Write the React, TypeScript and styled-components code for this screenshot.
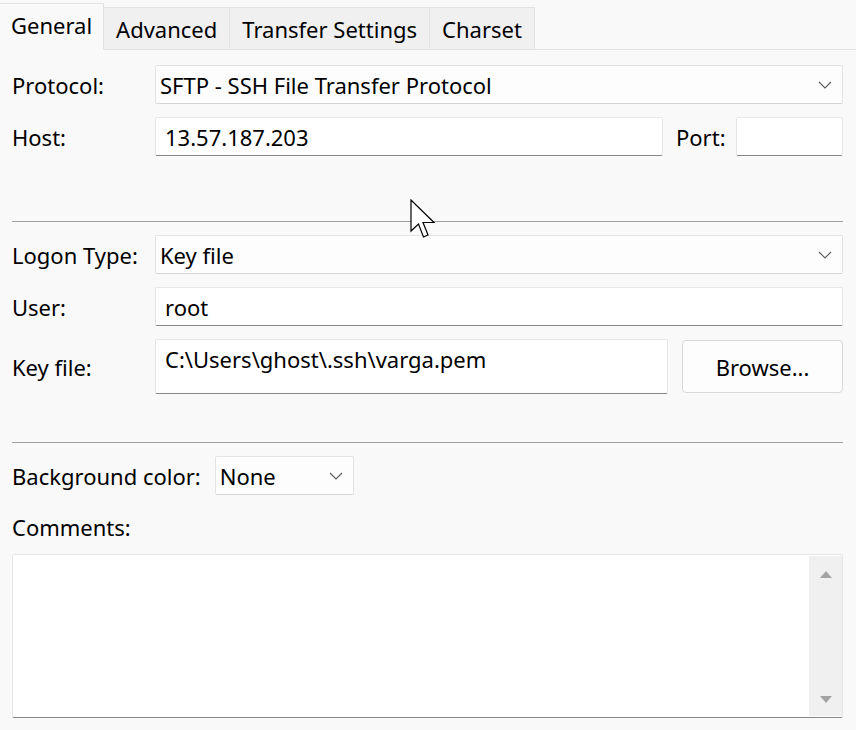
import React from "react";
import styled, { createGlobalStyle } from "styled-components";

const Global = createGlobalStyle`
  html, body { margin: 0; padding: 0; background: #f9f9f9; }
  body { font-family: "Segoe UI", "Noto Sans", "Open Sans", sans-serif; color: #000; }
  * { box-sizing: border-box; }
`;

const Window = styled.div`
  position: relative;
  width: 856px;
  height: 730px;
  overflow: hidden;
  background: #f9f9f9;
  font-size: 22px;
`;

const TabBar = styled.div`
  display: flex;
  align-items: flex-end;
  height: 50px;
  border-bottom: 1px solid #e2e2e2;
  background: #f9f9f9;
`;

const Tab = styled.div<{ $active?: boolean }>`
  display: flex;
  align-items: center;
  justify-content: center;
  height: ${(p) => (p.$active ? "47px" : "42px")};
  padding: 0 ${(p) => (p.$active ? "11px" : "12px")};
  margin-bottom: ${(p) => (p.$active ? "-1px" : "0")};
  background: ${(p) => (p.$active ? "#f9f9f9" : "#f0f0f0")};
  border: 1px solid #e2e2e2;
  border-bottom: ${(p) => (p.$active ? "1px solid #f9f9f9" : "none")};
  border-left: ${(p) => (p.$active ? "none" : "1px solid #e2e2e2")};
  margin-left: ${(p) => (p.$active ? "0" : "-1px")};
  padding-bottom: ${(p) => (p.$active ? "4px" : "0")};
  white-space: nowrap;
  &:first-child { margin-left: 0; }
`;

const Panel = styled.div`
  display: flex;
  flex-direction: column;
  padding: 15px 13px 0 12px;
`;

const Row = styled.div<{ $gap?: number; $h?: number }>`
  display: grid;
  grid-template-columns: 143px 1fr;
  align-items: center;
  height: ${(p) => p.$h ?? 39}px;
  margin-top: ${(p) => p.$gap ?? 0}px;
`;

const Label = styled.div`
  white-space: nowrap;
`;

const InlineRow = styled.div<{ $gap?: number }>`
  display: flex;
  align-items: center;
  gap: 14px;
  height: 39px;
  margin-top: ${(p) => p.$gap ?? 0}px;
`;

const Controls = styled.div`
  display: flex;
  align-items: center;
  height: 100%;
`;

const SelectBox = styled.div<{ $w?: number }>`
  display: flex;
  align-items: center;
  justify-content: space-between;
  height: 39px;
  width: ${(p) => (p.$w ? `${p.$w}px` : "100%")};
  background: #fdfdfd;
  border: 1px solid #e4e4e4;
  border-bottom-color: #d6d6d6;
  border-radius: 2px;
  padding: 0 10px 0 4px;
  white-space: nowrap;
`;

const TextBox = styled.div<{ $w?: number; $h?: number; $top?: boolean }>`
  display: flex;
  align-items: ${(p) => (p.$top ? "flex-start" : "center")};
  height: ${(p) => p.$h ?? 39}px;
  width: ${(p) => (p.$w ? `${p.$w}px` : "auto")};
  flex: ${(p) => (p.$w ? "none" : "1")};
  background: #ffffff;
  border: 1px solid #e6e6e6;
  border-bottom: 1px solid #868686;
  border-radius: 2px;
  padding: ${(p) => (p.$top ? "4px 9px 0" : "0 9px")};
  white-space: nowrap;
`;

const PortLabel = styled.div`
  margin: 0 0 0 13px;
  width: 60px;
`;

const Button = styled.div`
  display: flex;
  align-items: center;
  justify-content: center;
  width: 161px;
  height: 53px;
  margin-left: 14px;
  background: #fdfdfd;
  border: 1px solid #d9d9d9;
  border-radius: 4px;
`;

const Separator = styled.div<{ $top: number }>`
  height: 1px;
  background: #a0a0a0;
  margin-top: ${(p) => p.$top}px;
`;

const CommentsLabel = styled.div`
  margin-top: 14px;
  height: 36px;
  display: flex;
  align-items: center;
`;

const TextArea = styled.div`
  display: flex;
  justify-content: flex-end;
  height: 164px;
  margin-top: 9px;
  background: #ffffff;
  border: 1px solid #e6e6e6;
  border-bottom: 1px solid #868686;
  border-radius: 2px;
`;

const ScrollBar = styled.div`
  display: flex;
  flex-direction: column;
  justify-content: space-between;
  align-items: center;
  width: 33px;
  background: #f0f0f0;
  padding: 14px 0 12px;
  margin: 1px 0 1px 0;
`;

const Chevron = () => (
  <svg width="14" height="8" viewBox="0 0 14 8">
    <path d="M1 1 L7 7 L13 1" fill="none" stroke="#5a5a5a" strokeWidth="1.1" />
  </svg>
);

const Triangle = ({ up }: { up?: boolean }) => (
  <svg width="12" height="8" viewBox="0 0 12 8">
    <path d={up ? "M0 8 L6 1 L12 8 Z" : "M0 0 L6 7 L12 0 Z"} fill="#a3a3a3" />
  </svg>
);

const CursorWrap = styled.div`
  position: absolute;
  left: 410px;
  top: 199px;
  pointer-events: none;
`;

const Cursor = () => (
  <CursorWrap>
    <svg width="28" height="42" viewBox="0 0 28 42">
      <path
        d="M1 1 L1 32 L8.5 25 L13.5 38 L18 36 L13 23.5 L24 23.5 Z"
        fill="#ffffff"
        stroke="#000"
        strokeWidth="1.2"
        strokeLinejoin="miter"
      />
    </svg>
  </CursorWrap>
);

export default function App() {
  return (
    <Window>
      <Global />
      <TabBar>
        <Tab $active>General</Tab>
        <Tab>Advanced</Tab>
        <Tab>Transfer Settings</Tab>
        <Tab>Charset</Tab>
      </TabBar>
      <Panel>
        <Row>
          <Label>Protocol:</Label>
          <SelectBox>
            <span>SFTP - SSH File Transfer Protocol</span>
            <Chevron />
          </SelectBox>
        </Row>
        <Row $gap={13}>
          <Label>Host:</Label>
          <Controls>
            <TextBox>13.57.187.203</TextBox>
            <PortLabel>Port:</PortLabel>
            <TextBox $w={107} />
          </Controls>
        </Row>
        <Separator $top={65} />
        <Row $gap={13}>
          <Label>Logon Type:</Label>
          <SelectBox>
            <span>Key file</span>
            <Chevron />
          </SelectBox>
        </Row>
        <Row $gap={13}>
          <Label>User:</Label>
          <TextBox>root</TextBox>
        </Row>
        <Row $gap={13} $h={55}>
          <Label>Key file:</Label>
          <Controls>
            <TextBox $h={55} $top>C:\Users\ghost\.ssh\varga.pem</TextBox>
            <Button>Browse...</Button>
          </Controls>
        </Row>
        <Separator $top={48} />
        <InlineRow $gap={13}>
          <Label>Background color:</Label>
          <SelectBox $w={139}>
            <span>None</span>
            <Chevron />
          </SelectBox>
        </InlineRow>
        <CommentsLabel>Comments:</CommentsLabel>
        <TextArea>
          <ScrollBar>
            <Triangle up />
            <Triangle />
          </ScrollBar>
        </TextArea>
      </Panel>
      <Cursor />
    </Window>
  );
}
